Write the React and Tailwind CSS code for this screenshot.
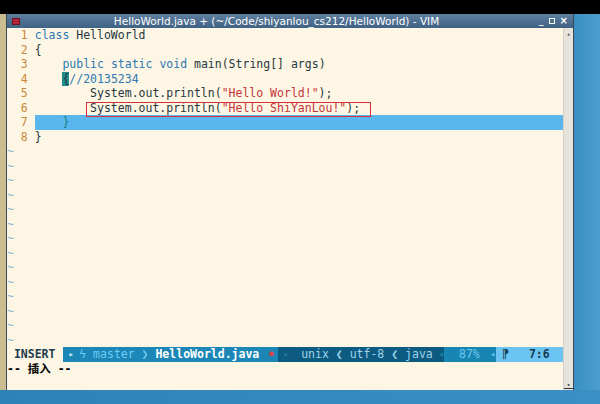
import React from "react";

const mono = { fontFamily: '"DejaVu Sans Mono", monospace' };

function Row({ n, children, cursor }) {
  return (
    <div className="flex h-[14.5px] leading-[14.5px] whitespace-pre">
      <span className="text-[#c8883a]">{n}</span>
      <span className={"flex-1 " + (cursor ? "bg-[#5bb6ee]" : "")}>{children}</span>
    </div>
  );
}

const K = ({ children }) => <span className="text-[#2b78b4]">{children}</span>;
const S = ({ children }) => <span className="text-[#c4363a]">{children}</span>;

export default function App() {
  const tildes = Array.from({ length: 14 });
  return (
    <div className="w-[600px] h-[404px] bg-black overflow-hidden flex flex-col" style={mono}>
      <div className="h-[14px] bg-black" />
      <div className="flex h-[376px]">
        <div className="w-[6px] bg-[#cbbd92]" />
        <div className="w-[568px] flex flex-col border-l border-r border-[#3c4a58] bg-[#fdf6e4]">
          {/* title bar */}
          <div className="h-[14px] flex items-center bg-gradient-to-b from-[#5f7f9f] to-[#3f6183] relative">
            <div className="ml-[5px] w-[8px] h-[7px] bg-[#b3243a] border border-[#6a1420]" />
            <div
              className="flex-1 text-center text-white text-[10.5px] leading-[14px] pr-[6px]"
              style={{ fontFamily: '"DejaVu Sans", sans-serif' }}
            >
              HelloWorld.java + (~/Code/shiyanlou_cs212/HelloWorld) - VIM
            </div>
            <div className="flex items-center gap-[5px] pr-[5px] text-white text-[9px] leading-none" style={{ fontFamily: '"DejaVu Sans", sans-serif' }}>
              <span className="font-bold">_</span>
              <span className="inline-block w-[6px] h-[6px] border border-white" />
              <span className="font-bold text-[10px]">×</span>
            </div>
          </div>
          {/* content */}
          <div className="flex flex-1">
            <div className="w-[556px] flex flex-col relative text-[11.5px] text-[#27363e]">
              <Row n="  1 "><K>class</K> HelloWorld</Row>
              <Row n="  2 ">{"{"}</Row>
              <Row n="  3 ">{"    "}<K>public</K> <K>static</K> <K>void</K> main(String[] args)</Row>
              <Row n="  4 ">{"    "}<span className="bg-[#1e8c8c] text-[#27363e]">{"{"}</span><K>//20135234</K></Row>
              <Row n="  5 ">{"        System.out.println("}<S>"Hello World!"</S>{");"}</Row>
              <Row n="  6 ">{"        System.out.println("}<S>"Hello ShiYanLou!"</S>{");"}</Row>
              <Row n="  7 " cursor>{"    "}<span className="text-[#1a7f80]">{"}"}</span></Row>
              <Row n="  8 ">{"}"}</Row>
              {tildes.map((_, i) => (
                <div key={i} className="h-[14.5px] leading-[14.5px] text-[#8cb6d4]">~</div>
              ))}
              {/* statusline */}
              <div className="flex h-[14.5px] leading-[14.5px] whitespace-pre">
                <span className="w-[56px] font-bold text-[#1d3c4c]">{" INSERT "}</span>
                <span className="w-[215px] bg-[#1c86b7] flex">
                  <span className="text-[#d0ecf8] text-[9px]">{" ▸ "}</span>
                  <span className="text-[#6fcbf2]">{"ϟ master ❯ "}</span>
                  <span className="text-white font-bold">HelloWorld.java</span>
                  <span className="text-[#d8424a] text-[8px]">{"  ●"}</span>
                </span>
                <span className="w-[160px] bg-[#0d5b80] text-[#9fd2ea] flex">
                  <span className="text-[#2a7ea6] text-[9px]">{" ▸ "}</span>
                  <span>{" unix ❮ utf-8 ❮ java "}</span>
                </span>
                <span className="w-[6px] bg-[#0d5b80] text-[#1786b2] text-[9px] text-right">◂</span>
                <span className="w-[46px] bg-[#1786b2] text-[#70c6ec] pl-[15px]">87%</span>
                <span className="w-[6px] bg-[#1786b2] text-[#6cc4f2] text-[9px]">◂</span>
                <span className="flex-1 bg-[#6cc4f2] text-[#163d52] pl-[6px]">
                  <span>⁋</span><span className="font-bold ml-[20px]">7:6</span>
                </span>
              </div>
              {/* cmdline */}
              <div
                className="h-[14.5px] leading-[14.5px] font-bold text-black whitespace-pre"
                style={{ fontFamily: '"DejaVu Sans Mono", "Noto Sans CJK SC", monospace' }}
              >
                -- 插入 --
              </div>
              <div className="absolute left-[79px] top-[74px] w-[285px] h-[15px] border border-[#d6303a]" />
            </div>
            {/* scrollbar */}
            <div className="flex-1 bg-[#e6e2dc] border-l border-[#d4d0c8] flex flex-col justify-between items-center py-[1px]">
              <div className="w-[9px] h-[8px] flex items-center justify-center text-[6px] text-[#333]">▴</div>
              <div className="w-[9px] h-[8px] flex items-center justify-center text-[6px] text-[#333] border-b border-[#333]">▾</div>
            </div>
          </div>
        </div>
        <div className="flex-1 bg-gradient-to-r from-[#3a8ec2] to-[#4c9fcf]" />
      </div>
      <div className="flex-1 bg-gradient-to-r from-[#2f82b8] to-[#3a90c4]" />
    </div>
  );
}
